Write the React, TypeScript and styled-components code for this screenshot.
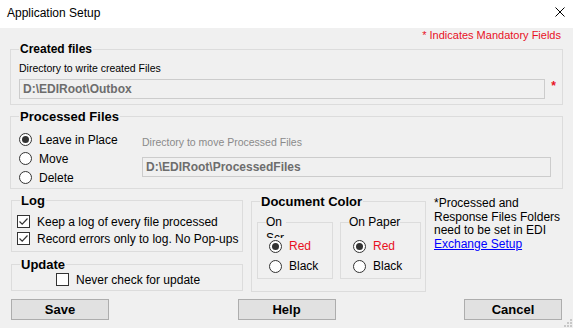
import React from 'react';
import styled, { createGlobalStyle } from 'styled-components';

const GlobalStyle = createGlobalStyle`
  html, body {
    margin: 0;
    padding: 0;
    background: #f0f0f0;
  }
  body {
    font-family: "Liberation Sans", Arial, sans-serif;
  }
`;

const Window = styled.div`
  position: relative;
  width: 573px;
  height: 328px;
  background: #f0f0f0;
  color: #000;
  font-family: "Liberation Sans", Arial, sans-serif;
  font-size: 12px;
  overflow: hidden;
`;

const TitleBar = styled.div`
  display: flex;
  align-items: flex-start;
  justify-content: space-between;
  height: 28px;
  box-sizing: border-box;
  padding: 6px 8px 0 7px;
  background: #fff;
`;

const TitleText = styled.span`
  font-size: 12px;
  line-height: 14px;
`;

const CloseIcon = styled.svg`
  margin-top: 1px;
`;

const Body = styled.div`
  display: flex;
  flex-direction: column;
  padding: 0 10px;
`;

const Note = styled.div`
  margin-top: 1px;
  padding-right: 2px;
  text-align: right;
  font-size: 11px;
  line-height: 13px;
  color: #e8111f;
`;

const Group = styled.fieldset<{ $mt?: number; $width?: number }>`
  margin: ${p => p.$mt ?? 0}px 0 0 0;
  padding: 0;
  border: 1px solid #dcdcdc;
  min-width: 0;
  ${p => (p.$width ? `width: ${p.$width}px; box-sizing: border-box; flex: none;` : '')}
`;

const Legend = styled.legend<{ $size?: number }>`
  margin-left: 8px;
  padding: 0 1px;
  font-weight: bold;
  font-size: ${p => p.$size ?? 13}px;
  line-height: ${p => (p.$size ?? 13) + 2}px;
`;

const SubLegend = styled.legend`
  margin-left: 8px;
  padding: 0;
  height: 14px;
  font-size: 12px;
  line-height: 14px;
`;

/* the "On Screen" caption is too narrow in the original dialog:
   it wraps and the radio buttons hide all but the top of its 2nd line */
const ClippedCaption = styled.span`
  display: block;
  width: 20px;
  height: 24px;
  overflow: hidden;
  line-height: 16px;
  margin-top: -1px;
  word-break: break-all;
`;

const GroupContent = styled.div<{ $pad: string }>`
  padding: ${p => p.$pad};
`;

const SmallLabel = styled.div<{ $muted?: boolean }>`
  font-size: 10.5px;
  line-height: 13px;
  color: ${p => (p.$muted ? '#8a8a8a' : '#000')};
  white-space: nowrap;
`;

const InputRow = styled.div`
  display: flex;
  align-items: center;
  margin-top: 4px;
`;

const TextBox = styled.input<{ $width: number }>`
  width: ${p => p.$width}px;
  height: 20px;
  box-sizing: border-box;
  margin: 0;
  padding: 0 0 0 3px;
  border: 1px solid #cccccc;
  background: #f0f0f0;
  font-family: "Liberation Sans", Arial, sans-serif;
  font-weight: bold;
  font-size: 12px;
  outline: none;

  &:disabled {
    color: #6d6d6d;
    -webkit-text-fill-color: #6d6d6d;
    opacity: 1;
  }
`;

const Star = styled.span`
  margin-left: 6px;
  margin-top: -6px;
  color: #e8111f;
  font-weight: bold;
  font-size: 12px;
`;

const ProcessedContent = styled.div`
  display: flex;
  padding: 6px 10px 1px 8px;
`;

const RadioList = styled.div`
  display: flex;
  flex-direction: column;
  width: 123px;
  flex: none;
`;

const MoveColumn = styled.div`
  display: flex;
  flex-direction: column;
  padding-top: 6px;
  gap: 8px;
`;

const OptionRow = styled.label<{ $height: number; $red?: boolean }>`
  display: flex;
  align-items: center;
  height: ${p => p.$height}px;
  gap: 7px;
  font-size: 12px;
  color: ${p => (p.$red ? '#e8111f' : '#000')};
  white-space: nowrap;
`;

const RadioCircle = styled.span<{ $on?: boolean }>`
  display: flex;
  align-items: center;
  justify-content: center;
  width: 13px;
  height: 13px;
  box-sizing: border-box;
  border: 1px solid #333;
  border-radius: 50%;
  background: #fff;
  flex: none;

  &::after {
    content: '';
    display: ${p => (p.$on ? 'block' : 'none')};
    width: 7px;
    height: 7px;
    border-radius: 50%;
    background: #333;
  }
`;

const CheckSquare = styled.span`
  display: flex;
  align-items: center;
  justify-content: center;
  width: 13px;
  height: 13px;
  box-sizing: border-box;
  border: 1px solid #333;
  background: #fff;
  flex: none;
`;

const BottomRow = styled.div`
  display: flex;
  align-items: flex-start;
  gap: 8px;
  margin-top: 4px;
  padding-left: 1px;
`;

const LeftColumn = styled.div`
  display: flex;
  flex-direction: column;
  gap: 5px;
  width: 232px;
  flex: none;
`;

const ColorGroups = styled.div`
  display: flex;
  gap: 7px;
  padding: 6px 4px 12px 5px;
`;

const SubGroup = styled.fieldset<{ $width: number }>`
  width: ${p => p.$width}px;
  box-sizing: border-box;
  margin: 0;
  padding: 0;
  border: 1px solid #dcdcdc;
  min-width: 0;
`;

const SubContent = styled.div<{ $padLeft: number }>`
  padding: 7px 0 2px ${p => p.$padLeft}px;
`;

const Info = styled.div`
  margin-top: 4px;
  font-size: 12px;
  line-height: 13.7px;
  white-space: nowrap;
`;

const Link = styled.a`
  color: #0000ff;
  text-decoration: underline;
  cursor: pointer;
`;

const ButtonRow = styled.div`
  display: flex;
  justify-content: space-between;
  margin-top: 7px;
  padding: 0 1px;
`;

const Button = styled.button`
  width: 98px;
  height: 21px;
  margin: 0;
  padding: 0;
  border: 1px solid #adadad;
  background: #e1e1e1;
  font-family: "Liberation Sans", Arial, sans-serif;
  font-weight: bold;
  font-size: 13px;
  color: #000;
`;

const SizeGrip = styled.svg`
  position: absolute;
  right: 1px;
  bottom: 1px;
`;

const Radio = ({ label, on, red, height }: { label: string; on?: boolean; red?: boolean; height: number }) => (
  <OptionRow $height={height} $red={red}>
    <RadioCircle $on={on} />
    {label}
  </OptionRow>
);

const Check = ({ label, on, height }: { label: string; on?: boolean; height: number }) => (
  <OptionRow $height={height}>
    <CheckSquare>
      {on && (
        <svg width="11" height="11" viewBox="0 0 11 11">
          <path d="M1.5 5.5 L4.2 8.2 L9.5 2.5" fill="none" stroke="#333" strokeWidth="1.2" />
        </svg>
      )}
    </CheckSquare>
    {label}
  </OptionRow>
);

export default function App() {
  return (
    <Window>
      <GlobalStyle />
      <TitleBar>
        <TitleText>Application Setup</TitleText>
        <CloseIcon width="10" height="10" viewBox="0 0 10 10">
          <path d="M0.5 0.5 L9.5 9.5 M9.5 0.5 L0.5 9.5" stroke="#000" strokeWidth="1" />
        </CloseIcon>
      </TitleBar>
      <Body>
        <Note>* Indicates Mandatory Fields</Note>

        <Group>
          <Legend $size={12}>Created files</Legend>
          <GroupContent $pad="6px 6px 5px 8px">
            <SmallLabel>Directory to write created Files</SmallLabel>
            <InputRow>
              <TextBox $width={531} disabled value="D:\EDIRoot\Outbox" readOnly />
              <Star>*</Star>
            </InputRow>
          </GroupContent>
        </Group>

        <Group $mt={4}>
          <Legend>Processed Files</Legend>
          <ProcessedContent>
            <RadioList>
              <Radio height={19} on label="Leave in Place" />
              <Radio height={19} label="Move" />
              <Radio height={19} label="Delete" />
            </RadioList>
            <MoveColumn>
              <SmallLabel $muted>Directory to move Processed Files</SmallLabel>
              <TextBox $width={409} disabled value="D:\EDIRoot\ProcessedFiles" readOnly />
            </MoveColumn>
          </ProcessedContent>
        </Group>

        <BottomRow>
          <LeftColumn>
            <Group>
              <Legend>Log</Legend>
              <GroupContent $pad="5px 0 4px 5px">
                <Check height={17} on label="Keep a log of every file processed" />
                <Check height={17} on label="Record errors only to log. No Pop-ups" />
              </GroupContent>
            </Group>
            <Group>
              <Legend>Update</Legend>
              <GroupContent $pad="0 0 3px 44px">
                <Check height={15} label="Never check for update" />
              </GroupContent>
            </Group>
          </LeftColumn>

          <Group $width={175} $mt={1}>
            <Legend>Document Color</Legend>
            <ColorGroups>
              <SubGroup $width={76}>
                <SubLegend>
                  <ClippedCaption>On Screen</ClippedCaption>
                </SubLegend>
                <SubContent $padLeft={11}>
                  <Radio height={20} on red label="Red" />
                  <Radio height={20} label="Black" />
                </SubContent>
              </SubGroup>
              <SubGroup $width={81}>
                <SubLegend>On Paper</SubLegend>
                <SubContent $padLeft={12}>
                  <Radio height={20} on red label="Red" />
                  <Radio height={20} label="Black" />
                </SubContent>
              </SubGroup>
            </ColorGroups>
          </Group>

          <Info>
            *Processed and
            <br />
            Response Files Folders
            <br />
            need to be set in EDI
            <br />
            <Link>Exchange Setup</Link>
          </Info>
        </BottomRow>

        <ButtonRow>
          <Button>Save</Button>
          <Button>Help</Button>
          <Button>Cancel</Button>
        </ButtonRow>
      </Body>
      <SizeGrip width="8" height="8" viewBox="0 0 8 8">
        {[[6, 0], [6, 3], [3, 3], [6, 6], [3, 6], [0, 6]].map(([x, y]) => (
          <rect key={`${x}-${y}`} x={x} y={y} width="2" height="2" fill="#c8c8c8" />
        ))}
      </SizeGrip>
    </Window>
  );
}
